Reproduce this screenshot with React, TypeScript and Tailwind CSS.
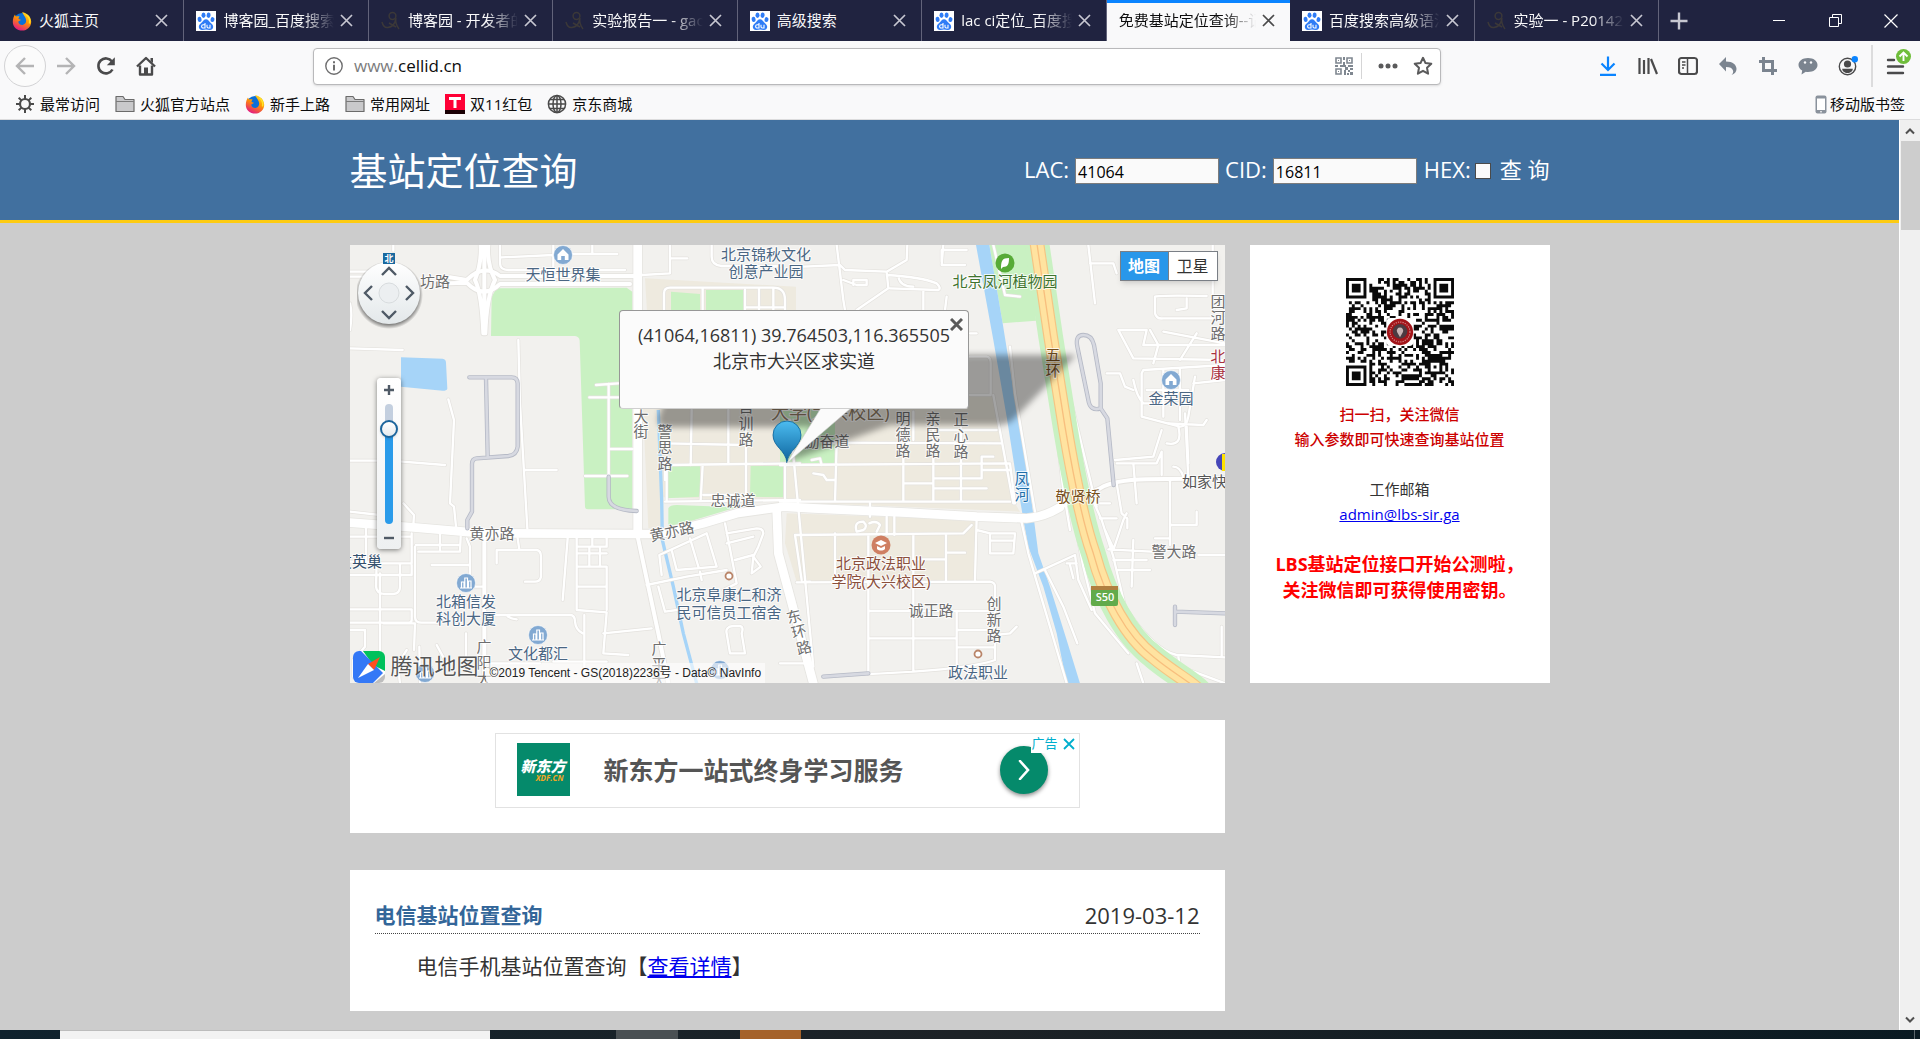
import type { ReactNode } from "react";

const FONT = "font-['Open_Sans','Noto_Sans_CJK_SC',sans-serif]";

/* ---------- small drawings ---------- */

function Svg({ size = 20, box = 20, children, className = "" }: { size?: number; box?: number; children: ReactNode; className?: string }) {
  return (
    <svg width={size} height={size} viewBox={`0 0 ${box} ${box}`} fill="none" className={`shrink-0 ${className}`} aria-hidden="true">
      {children}
    </svg>
  );
}

function FirefoxIcon() {
  return (
    <Svg>
      <defs>
        <linearGradient id="fox" x1="0.8" y1="0" x2="0.3" y2="1">
          <stop offset="0" stopColor="#ffe226" />
          <stop offset="0.45" stopColor="#ff9400" />
          <stop offset="1" stopColor="#e31587" />
        </linearGradient>
      </defs>
      <circle cx="10" cy="10.5" r="8.6" fill="#0a6fd8" />
      <path d="M10 1.2c5 .6 9.200 4.200 9.200 9.600 0 5-4 8.800-9 8.800S.8 16 .8 11c0-3 .9-6 2.200-7.600.2 1 .5 1.600 1 2.200C5 5 6.500 5 7.600 5.500 6.800 6.200 6.400 7 6.600 8l2.200.8c-.4 1-2 1.300-2.600 2 .6 2.600 3 3.600 5 3 2.600-.8 3.600-3.400 2.600-6C13 5.400 11.200 3.400 10 1.200z" fill="url(#fox)" />
      <path d="M14.500 4c2.600 2 3.800 5.300 3 8.500" stroke="#ffe226" strokeWidth="1.500" />
    </Svg>
  );
}

function BaiduIcon() {
  return (
    <Svg>
      <rect width="20" height="20" fill="#fff" />
      <g fill="#2f7cf6">
        <ellipse cx="3.600" cy="8.400" rx="2" ry="2.600" transform="rotate(-12 3.600 8.400)" />
        <ellipse cx="7.500" cy="4.200" rx="2" ry="2.700" />
        <ellipse cx="12.600" cy="4.200" rx="2" ry="2.700" transform="rotate(8 12.600 4.200)" />
        <ellipse cx="16.500" cy="8.600" rx="2" ry="2.500" transform="rotate(12 16.500 8.600)" />
        <path d="M10 8.200c2 0 2.800 1.600 4 3 1.300 1.400 3.400 2.500 3.200 4.900-.2 2.200-1.900 3-3.700 2.800-1.200-.2-2.300-.5-3.500-.5s-2.300.3-3.500.5c-1.800.2-3.500-.6-3.700-2.800-.2-2.400 1.900-3.500 3.200-4.900 1.200-1.400 2-3 4-3z" />
      </g>
      <path d="M9 12v5H7.200a1.600 1.600 0 0 1 0-3.200H9M11 13.800v2c0 .8.500 1.200 1.300 1.200H14v-3.200" stroke="#fff" strokeWidth="1.100" />
    </Svg>
  );
}

function BlogIcon() {
  return (
    <Svg>
      <g stroke="#3b3838" strokeWidth="1.500">
        <circle cx="11.500" cy="5" r="3.400" />
        <path d="M1 11c1 4 3 6 6 5.500 4-.5 7-4 8-9M15 7c-1 4 0 7 3 11M8 12l7 4" />
      </g>
    </Svg>
  );
}

function CloseGlyph({ className = "text-[#c7c7d1]" }: { className?: string }) {
  return (
    <Svg size={13} box={13} className={className}>
      <path d="M1 1l11 11M12 1L1 12" stroke="currentColor" strokeWidth="1.700" />
    </Svg>
  );
}

function FolderIcon() {
  return (
    <Svg>
      <path d="M1 17.500V2.500h7l2 3h9v12z" fill="#c9c9cb" stroke="#6b6b6b" strokeWidth="1.200" strokeLinejoin="round" />
      <path d="M1 7.500h18" stroke="#7b7b7b" />
    </Svg>
  );
}

function GearIcon() {
  return (
    <Svg>
      <circle cx="10" cy="10" r="5" stroke="#4a4a4a" strokeWidth="2.200" />
      <g stroke="#4a4a4a" strokeWidth="2">
        <path d="M10 1v4M10 15v4M1 10h4M15 10h4M3.700 3.700l2.700 2.700M13.600 13.600l2.700 2.700M3.700 16.300l2.700-2.700M13.600 6.400l2.700-2.700" />
      </g>
    </Svg>
  );
}

function ShopIcon() {
  return (
    <Svg>
      <rect width="20" height="20" fill="#ff0036" />
      <rect y="16" width="20" height="4" fill="#1a0005" />
      <path d="M4 4.500h12M10 4.500V14" stroke="#fff" strokeWidth="3" />
    </Svg>
  );
}

function GlobeIcon() {
  return (
    <Svg>
      <g stroke="#4a4a4a" strokeWidth="1.500">
        <circle cx="10" cy="10" r="8.600" />
        <ellipse cx="10" cy="10" rx="4" ry="8.600" />
        <path d="M10 1.400v17.200M1.400 10h17.200M2.800 5.500h14.400M2.800 14.500h14.400" />
      </g>
    </Svg>
  );
}

function PhoneIcon() {
  return (
    <svg width="12" height="19" viewBox="0 0 12 19" aria-hidden="true">
      <rect x="0.500" y="0.500" width="11" height="18" rx="2" fill="#8a929c" />
      <rect x="2" y="3.500" width="8" height="11.500" fill="#fff" />
      <path d="M5 16.800h2" stroke="#fff" />
    </svg>
  );
}

function Chevron({ up = false }: { up?: boolean }) {
  return (
    <Svg size={10} box={10}>
      <path d={up ? "M1 7.500L5 3.500L9 7.500" : "M1 2.500L5 6.500L9 2.500"} stroke="#505050" strokeWidth="2" />
    </Svg>
  );
}

/* ---------- browser chrome ---------- */

type Tab = { title: string; icon?: ReactNode; active?: boolean; fade?: boolean };

const tabs: Tab[] = [
  { title: "火狐主页", icon: <FirefoxIcon /> },
  { title: "博客园_百度搜索", icon: <BaiduIcon />, fade: true },
  { title: "博客园 - 开发者的网上家园", icon: <BlogIcon />, fade: true },
  { title: "实验报告一 - gaoxing", icon: <BlogIcon />, fade: true },
  { title: "高级搜索", icon: <BaiduIcon /> },
  { title: "lac ci定位_百度搜索", icon: <BaiduIcon />, fade: true },
  { title: "免费基站定位查询--记录", active: true, fade: true },
  { title: "百度搜索高级语法", icon: <BaiduIcon />, fade: true },
  { title: "实验一 - P201421", icon: <BlogIcon />, fade: true },
];

function TabStrip() {
  return (
    <div className="flex h-[41px] shrink-0 bg-[#202340] text-[15px] text-[#f9f9fa]">
      <div role="tablist" className="flex w-[1659px] min-w-0">
        {tabs.map((t) => (
          <div
            key={t.title}
            role="tab"
            aria-selected={!!t.active}
            className={
              t.active
                ? "flex min-w-0 flex-1 items-center border-t-3 border-[#0a84ff] bg-[#f9f9fa] pr-[15px] pb-[3px] pl-3 text-[#0c0c0d]"
                : "flex min-w-0 flex-1 items-center border-r border-[#62637a] pr-[15px] pl-3"
            }
          >
            {t.icon && <span className="mr-[7px]">{t.icon}</span>}
            <span
              className={
                t.fade
                  ? "min-w-0 flex-1 overflow-hidden whitespace-nowrap [mask-image:linear-gradient(to_left,transparent,black_32px)]"
                  : "min-w-0 flex-1 overflow-hidden whitespace-nowrap"
              }
            >
              {t.title}
            </span>
            <button type="button" aria-label="关闭标签页" className="ml-1.5">
              <CloseGlyph className={t.active ? "text-[#4a4a4a]" : "text-[#c7c7d1]"} />
            </button>
          </div>
        ))}
      </div>
      <button type="button" aria-label="新建标签页" className="flex w-10 items-center justify-center">
        <Svg size={18} box={18}>
          <path d="M9 0.500v17M0.500 9h17" stroke="#c7c7d1" strokeWidth="2.400" />
        </Svg>
      </button>
      <div className="mr-px ml-auto flex">
        <button type="button" aria-label="最小化" className="flex w-14 items-center justify-center">
          <Svg size={12} box={12}>
            <path d="M0 5.500h12" stroke="#fff" />
          </Svg>
        </button>
        <button type="button" aria-label="还原" className="flex w-14 items-center justify-center">
          <Svg size={13} box={13}>
            <path d="M0.500 3.500h9v9h-9zM3.500 3.500v-3h9v9h-3" stroke="#fff" />
          </Svg>
        </button>
        <button type="button" aria-label="关闭" className="flex w-14 items-center justify-center">
          <Svg size={14} box={14}>
            <path d="M0.500 0.500l13 13M13.500 0.500l-13 13" stroke="#fff" strokeWidth="1.200" />
          </Svg>
        </button>
      </div>
    </div>
  );
}

function ToolButton({ label, children }: { label: string; children: ReactNode }) {
  return (
    <button type="button" aria-label={label} className="flex h-10 w-10 shrink-0 items-center justify-center">
      {children}
    </button>
  );
}

function NavBar() {
  return (
    <div className="flex h-[50px] shrink-0 items-center bg-[#f9f9fa] pr-1 pl-1">
      <button type="button" aria-label="后退" className="flex h-[42px] w-[42px] shrink-0 items-center justify-center rounded-full border border-[#d3d3d5] bg-[#fbfbfb]">
        <Svg>
          <path d="M19 10H2M10 2L2 10l8 8" stroke="#b4b4b5" strokeWidth="2.400" />
        </Svg>
      </button>
      <ToolButton label="前进">
        <Svg>
          <path d="M1 10h17M10 2l8 8-8 8" stroke="#b4b4b5" strokeWidth="2.400" />
        </Svg>
      </ToolButton>
      <ToolButton label="刷新">
        <Svg>
          <path d="M16.500 13.500A7.500 7.500 0 1 1 16 5.500" stroke="#4a4a4b" strokeWidth="2.600" />
          <path d="M18.800 1.200v8h-8z" fill="#4a4a4b" />
        </Svg>
      </ToolButton>
      <ToolButton label="主页">
        <Svg>
          <path d="M1 10.500L10 2l9 8.500" stroke="#4a4a4b" strokeWidth="2.400" strokeLinejoin="round" />
          <path d="M4 9.500V18.500h12V9.500" stroke="#4a4a4b" strokeWidth="2.400" strokeLinejoin="round" />
          <path d="M8 18.500v-7h4v7z" fill="#4a4a4b" />
          <path d="M14.500 2h2.500v5l-2.500-2z" fill="#4a4a4b" />
        </Svg>
      </ToolButton>
      <div className="w-[147px] shrink-0" />
      <div className="flex h-[37px] min-w-0 flex-1 items-center rounded-sm border border-[#b9b9bb] bg-white pr-[7px] pl-[11px] shadow-sm">
        <Svg size={18} box={18}>
          <circle cx="9" cy="9" r="8.200" stroke="#6e6e6f" strokeWidth="1.400" />
          <path d="M9 7.800V13.500M9 4.200v2" stroke="#6e6e6f" strokeWidth="2" />
        </Svg>
        <div className="ml-[11px] flex-1 text-[17px] text-[#0c0c0d]">
          <span className="text-[#7c7c7d]">www.</span>cellid.cn
        </div>
        <Svg size={18} box={18}>
          <g stroke="#7f8790" strokeWidth="1.600">
            <path d="M1 1h5v5H1zM12 1h5v5h-5zM1 12h5v5H1z" />
          </g>
          <path d="M3 3h1v1H3zM14 3h1v1h-1zM3 14h1v1H3zM8 0h2v3H8zM8 5h2v3H8zM0 8h3v2H0zM5 8h6v2H5zM13 8h5v2h-5zM10 10h3v3h-3zM13 13h2v2h-2zM15 11h3v2h-3zM9 13h2v5H9zM12 16h2v2h-2zM15 15h3v3h-3z" fill="#7f8790" />
        </Svg>
        <div className="mx-2 h-[26px] w-px bg-[#d5d5d6]" />
        <button type="button" aria-label="页面操作" className="flex w-9 justify-center">
          <Svg>
            <circle cx="3" cy="10" r="2.500" fill="#5a5a5b" />
            <circle cx="10" cy="10" r="2.500" fill="#5a5a5b" />
            <circle cx="17" cy="10" r="2.500" fill="#5a5a5b" />
          </Svg>
        </button>
        <button type="button" aria-label="收藏" className="ml-[7px]">
          <Svg>
            <path d="M10 1.800l2.500 5.300 5.800.7-4.300 4 1.100 5.900L10 14.800l-5.100 2.900L6 11.800l-4.300-4 5.800-.7z" stroke="#5a5a5b" strokeWidth="2" strokeLinejoin="round" />
          </Svg>
        </button>
      </div>
      <div className="w-[147px] shrink-0" />
      <ToolButton label="下载">
        <Svg>
          <path d="M10 .5v13M3.500 7.500L10 14l6.500-6.500M2 18.800h16" stroke="#0a84ff" strokeWidth="2.200" />
        </Svg>
      </ToolButton>
      <ToolButton label="我的足迹">
        <Svg>
          <path d="M1.500 2v16M6 4v14M10.500 2v16" stroke="#4a4a4b" strokeWidth="2.200" />
          <path d="M13 3l6 15" stroke="#4a4a4b" strokeWidth="2.200" />
        </Svg>
      </ToolButton>
      <ToolButton label="侧栏">
        <Svg>
          <rect x="1" y="2" width="18" height="16" rx="2.500" stroke="#4a4a4b" strokeWidth="2.200" />
          <path d="M9.500 2v16M4 6h3.500M4 9h3.500M4 12h2" stroke="#4a4a4b" strokeWidth="1.500" />
        </Svg>
      </ToolButton>
      <ToolButton label="撤销">
        <Svg>
          <path d="M8 1v4.500c7 0 10.500 3.500 10.500 7.500 0 3-2 5-5 6 1.500-1.500 2-3 1.500-4.500C14.300 12 12 11 8 11v4.500L1 8z" fill="#7b848f" />
        </Svg>
      </ToolButton>
      <ToolButton label="截图">
        <Svg>
          <path d="M5.500 1v13.500H19M1 5.500h13.500V19" stroke="#7b848f" strokeWidth="3" />
        </Svg>
      </ToolButton>
      <ToolButton label="聊天">
        <Svg>
          <path d="M10 2c5.500 0 9.500 2.800 9.500 7s-4 7-9.500 7c-.8 0-1.500 0-2.200-.2L3.500 18.500l.7-4C1.800 13.200.5 11.200.5 9c0-4.200 4-7 9.500-7z" fill="#7b848f" />
          <circle cx="7" cy="6.500" r="1.200" fill="#f9f9fa" />
          <circle cx="13" cy="6.500" r="1.200" fill="#f9f9fa" />
        </Svg>
      </ToolButton>
      <ToolButton label="账户">
        <Svg>
          <circle cx="9.500" cy="10.500" r="8.200" stroke="#4a4a4b" strokeWidth="1.400" />
          <circle cx="9.500" cy="8" r="3.600" fill="#4a4a4b" />
          <path d="M4.200 12.800h10.600c0 2.600-2.300 4.200-5.300 4.200s-5.300-1.600-5.300-4.200z" fill="#4a4a4b" />
          <circle cx="16.800" cy="3.200" r="3.200" fill="#0a84ff" />
        </Svg>
      </ToolButton>
      <div className="mx-[3px] h-[42px] w-[2px] bg-[#dcdcdd]" />
      <ToolButton label="菜单">
        <Svg size={34} box={34}>
          <path d="M9 11h6M9 17.500h15M9 24h15" stroke="#4a4a4b" strokeWidth="2.400" strokeLinecap="round" />
          <circle cx="24.500" cy="7.500" r="7.500" fill="#6fbe3b" />
          <path d="M24.500 12V4M20.500 7.500l4-4 4 4" stroke="#fff" strokeWidth="1.900" />
        </Svg>
      </ToolButton>
    </div>
  );
}

const bookmarks: { label: string; icon: ReactNode }[] = [
  { label: "最常访问", icon: <GearIcon /> },
  { label: "火狐官方站点", icon: <FolderIcon /> },
  { label: "新手上路", icon: <FirefoxIcon /> },
  { label: "常用网址", icon: <FolderIcon /> },
  { label: "双11红包", icon: <ShopIcon /> },
  { label: "京东商城", icon: <GlobeIcon /> },
];

function BookmarkBar() {
  return (
    <div className="flex h-[29px] shrink-0 items-center gap-[15px] border-b border-[#dcdcdd] bg-[#f9f9fa] pr-[15px] pb-0.5 pl-[15px] text-[15px] text-[#0c0c0d]">
      {bookmarks.map((b) => (
        <button type="button" key={b.label} className="flex items-center gap-[5px] whitespace-nowrap">
          {b.icon}
          {b.label}
        </button>
      ))}
      <button type="button" className="ml-auto flex items-center gap-[3px] whitespace-nowrap">
        <PhoneIcon />
        移动版书签
      </button>
    </div>
  );
}

/* ---------- map ---------- */

type Tile = { dx: number; dy: number; d: string };

const NW = { dx: -30, dy: -375 };
const NE = { dx: 1290, dy: -45 };
const SW = { dx: -30, dy: 465 };
const SE = { dx: 1290, dy: 525 };

const beige: Tile[] = [
  { ...NE, d: "M-405 145L48 170V500L640 495L705 820L720 845L0 815L-385 800V480z" },
  { ...SW, d: "M908 0H970V385H925z" },
  { ...SE, d: "M20 280L320 290L585 300V480L50 485L15 370z" },
];

const green: Tile[] = [
  { ...NW, d: "M470 505L860 503L877 515V1168H745Q736 1168 735 1160L719 662Q718 650 705 648H453L455 530z" },
  { ...NW, d: "M993 515L1080 522V600H993zM1098 510H1213V600H1098z" },
  { ...SW, d: "M985 195L1080 197V290L978 295zM1232 198H1330V292L1230 290zM985 325Q990 315 1010 315L1190 322L1030 370L985 378z" },
  { ...NE, d: "M628 45H750L768 272L668 280z" },
  { ...NE, d: "M0 520H165V700H0z" },
];

const major: Tile[] = [
  { ...SW, d: "M893 -480V400" },
  { ...SW, d: "M30 368L220 382L430 400L880 402H960L1090 370L1190 340L1330 320L1420 325L1700 338L1910 350L2060 355Q2110 352 2160 322" },
  { ...SW, d: "M1310 330L1315 460L1350 590L1420 850" },
];

const mid: Tile[] = [
  { ...SW, d: "M893 410L955 700L985 850" },
  { ...SW, d: "M433 410V850" },
  { ...NW, d: "M433 375V640M422 375Q425 430 405 480Q425 520 430 640M445 375Q440 430 465 480Q440 530 436 640" },
  { ...NW, d: "M330 472L380 480Q430 430 480 468H900M330 490L380 488Q430 540 480 492H870" },
  { ...SE, d: "M840 262Q900 230 960 205Q1000 180 1100 178L1335 175" },
];

const minor: Tile[] = [
  { ...NW, d: "M480 375V430Q480 450 505 450H855M485 412L640 405M640 375V440M690 402H832M757 375V400M990 375V460L905 465M990 415H1042M1115 375V410Q1115 435 1145 438H1320M30 685L188 690M160 375V392M30 455H100M30 470H100M30 550Q38 580 30 630" },
  { ...NW, d: "M972 570V520Q972 503 990 503H1300Q1335 503 1335 540V570M1088 505V570M1215 510V570M1257 505V570M1300 505V570M1215 562H1335" },
  { ...NW, d: "M535 660L540 850L562 1225M555 1050H650M325 838L342 900L330 1150L342 1160L348 1220M30 1022H150L315 1035M768 795L835 790M806 792V1070M748 832H835M806 987H878M735 1068H862" },
  { ...SW, d: "M30 335L120 345M190 310L222 345L220 375M30 410H215M78 385V490H215V400M30 485H110L108 560Q110 582 135 582H160Q180 580 180 560V490M120 520V850M30 525H215V495M30 628H215V660Q215 668 205 668H30M130 670H225L222 750M30 690H75V740L40 780V830M228 435H360M225 440V650Q225 668 245 668H300M235 455H360L362 410M275 495H390V440L380 415M390 495V560H430M300 400V450M240 850L238 740M290 735L320 790M378 700V790M180 850Q170 790 200 750" },
  { ...SW, d: "M470 490V450H590Q603 452 603 470V530Q600 545 585 545H555M533 415L538 450M683 415L668 600M710 415V630L800 637L790 760L865 765M712 440H800V415M757 415V440M748 440V500M780 440V500M712 500H800V630M712 460H800M712 560H800M800 415V440M445 645H690Q705 645 705 665Q707 690 728 700M733 645V820M500 645Q505 655 530 658M790 700L935 685M433 790H600M640 785H800" },
  { ...SW, d: "M975 195L1380 190M975 130L1215 135M1055 30L1052 195M1165 30V190M1218 30V290M1088 195L1082 300M975 305L1380 300M1335 195V300M1090 285H1218M980 195V300M975 240V190" },
  { ...SW, d: "M965 525L958 465L1100 400L1130 500L1010 510L995 450M1050 415L1075 500M920 555L1040 530L1160 510M955 560L975 635L1010 630M1155 370L1190 550L1150 570M1160 400L1250 385Q1270 385 1270 400L1255 440L1240 470L1262 500L1235 520M1160 430L1240 410M1235 520L1240 470M1185 480L1240 465M1085 540L1080 515M1160 700Q1155 680 1180 678H1200Q1212 680 1205 700L1215 760H1170z" },
  { ...NE, d: "M170 45L190 210L195 240M70 110L180 105L195 120L320 125L380 90L382 45M320 125L325 175L230 240M190 150L230 165H260V150H220V165M320 135Q420 140 470 160Q485 175 475 180L330 175M430 180V240M355 140Q360 170 400 170M490 45L485 105H555M485 95V60H560M500 200L495 240M570 310H590" },
  { ...NE, d: "M640 45L675 195L720 200M570 380H620Q632 382 632 400V495H570M690 350L705 490L765 845M800 245L825 560L850 780L870 900M870 500L950 830M640 495L700 820M400 545V630M0 705L690 700L705 820M130 638L665 640M370 590V815M460 590V815M543 590V815M370 760H460M460 745H605V680H640M460 775H620M605 720H690M170 640L165 815M270 820V860M0 815H690M480 600H650M95 690L120 685L125 705M100 730L130 735L140 750H165" },
  { ...NE, d: "M925 45L945 220M930 100H1000L1010 130M1125 200Q1140 195 1280 198M1125 200V250Q1130 268 1150 265H1335M1190 240L1220 235V205M1298 45V200M1015 300L1060 385L1335 390M1015 300H1100L1090 345H1335M1110 300L1135 345L1120 400M1150 305L1335 340M1250 310L1200 390M980 430H1020L1035 470L1060 480M1085 430L1090 420L1335 405M1085 430V560L1200 590Q1220 590 1225 560L1245 440M1100 480H1225M1090 520H1220M1150 420V560M1200 420V570M1060 450Q1070 500 1090 520M1240 460L1335 450M1145 600L1120 680L1005 690M1220 590L1225 700M1160 640Q1210 650 1195 590" },
  { ...SE, d: "M45 345L550 340L575 315M45 345L65 480M165 340V480M265 345V760M400 345V755M498 345V480M590 295L585 480M55 487L630 485Q645 487 645 500V720Q560 750 265 762M50 487L90 485M500 398H555M400 418H498M590 330L630 340H705L700 400H630V340M630 362H702M320 290V345M343 290V345M265 573H645M265 655H530M530 575V740M530 630H645M530 682H645M645 645L690 640L710 620M230 335Q220 305 250 305Q265 320 250 330zM268 310Q290 300 300 315L290 335" },
  { ...SE, d: "M720 285L745 400L860 790M870 230L910 440L945 580L1045 700M765 460L885 405L895 480L935 570M795 450L850 560L892 670M860 430H890M870 435L880 475M925 210L965 300L1000 410L1035 560Q1120 690 1190 705L1335 712M1000 390L1030 300L1040 280M960 295H1010M975 330L1000 385M960 250H990M1010 190L1025 280L1042 295V325M1060 130L1070 250M1010 130H1130L1145 95M1145 95V165M1170 180V375M1125 355H1170M1170 315H1250V275M1180 140Q1200 140 1210 170M1215 -20L1225 175M985 388L1115 395M1000 420L1100 420M1015 450H1110M1060 360L1055 500M1255 405H1335M1165 10L1270 15L1280 0M1195 710L1200 740L1335 790M1070 730L1090 790M1325 620V712M0 730H80M30 0L100 740" },
];

const grey: Tile[] = [
  { ...NW, d: "M388 772H515Q532 772 533 790V980Q530 1005 505 1008L410 1015Q395 1016 396 1035V1175L382 1200V1225M438 775L443 1008" },
  { ...SW, d: "M806 230V290Q806 330 890 333" },
  { ...NE, d: "M962 535Q930 545 925 510L892 350Q885 315 910 315Q935 315 942 345L962 460V535L982 565L1001 765" },
  { ...SE, d: "M1185 560V615M1185 575L1335 580M130 770L265 760" },
];

const highway = "M770 -535L812 -250L855 20C880 170 905 300 940 400C975 530 1040 650 1120 710C1180 760 1230 785 1260 815";

function Roads({ items, width, color }: { items: Tile[]; width: number; color: string }) {
  return (
    <g fill="none" stroke={color} strokeWidth={width} strokeLinecap="round" strokeLinejoin="round">
      {items.map((t, i) => (
        <path key={i} d={t.d} transform={`translate(${t.dx} ${t.dy})`} />
      ))}
    </g>
  );
}

function Areas({ items, color }: { items: Tile[]; color: string }) {
  return (
    <g fill={color}>
      {items.map((t, i) => (
        <path key={i} d={t.d} transform={`translate(${t.dx} ${t.dy})`} />
      ))}
    </g>
  );
}

type Label = { x: number; y: number; t: string; c: string; anchor?: "start" | "end"; rot?: number };

const ROAD = "#6e6e6e";
const PLACE = "#4a6683";
const BROWN = "#8a4f3c";

const column = (text: string, x: number, ys: number[], c = ROAD): Label[] => [...text].map((t, i) => ({ x, y: ys[i], t, c }));

const labels: Label[] = [
  { x: 213, y: 30, t: "天恒世界集", c: PLACE },
  { x: 416, y: 10, t: "北京锦秋文化", c: PLACE },
  { x: 416, y: 27, t: "创意产业园", c: PLACE },
  { x: 85, y: 37, t: "坊路", c: ROAD },
  { x: 655, y: 37, t: "北京凤河植物园", c: "#40742f" },
  ...column("五环", 703, [110, 126], "#77501c"),
  ...column("明德路", 553, [174, 190, 206]),
  ...column("亲民路", 583, [174, 190, 206]),
  ...column("正心路", 611, [175, 191, 207]),
  ...column("凤河", 672, [234, 250], "#1e6ea8"),
  { x: 728, y: 252, t: "敬贤桥", c: "#77501c" },
  { x: 821, y: 154, t: "金荣园", c: PLACE },
  { x: 832, y: 237, t: "如家快", c: "#555555", anchor: "start" },
  ...column("团河路", 868, [57, 73, 89]),
  ...column("北康", 868, [112, 128], "#a8323f"),
  { x: 477, y: 197, t: "励奋道", c: ROAD },
  ...column("大街", 291, [172, 187]),
  ...column("警思路", 315, [187, 203, 219]),
  ...column("营训路", 396, [162, 179, 195]),
  { x: 383, y: 256, t: "忠诚道", c: ROAD },
  { x: 142, y: 289, t: "黄亦路", c: ROAD },
  { x: 322, y: 287, t: "黄亦路", c: ROAD, rot: -12 },
  { x: 32, y: 317, t: "友英巢", c: "#334f6d", anchor: "end" },
  { x: 116, y: 357, t: "北箱信发", c: PLACE },
  { x: 116, y: 374, t: "科创大厦", c: PLACE },
  { x: 188, y: 409, t: "文化都汇", c: PLACE },
  { x: 379, y: 350, t: "北京阜康仁和济", c: PLACE },
  { x: 379, y: 368, t: "民可信员工宿舍", c: PLACE },
  ...column("广阳大", 134, [402, 418, 434]),
  ...column("广平大", 309, [404, 420, 436]),
  { x: 444, y: 372, t: "东", c: ROAD, rot: -14 },
  { x: 449, y: 387, t: "环", c: ROAD, rot: -14 },
  { x: 454, y: 403, t: "路", c: ROAD, rot: -14 },
  { x: 531, y: 319, t: "北京政法职业", c: BROWN },
  { x: 531, y: 337, t: "学院(大兴校区)", c: BROWN },
  { x: 581, y: 366, t: "诚正路", c: ROAD },
  ...column("创新路", 644, [359, 375, 391]),
  { x: 628, y: 428, t: "政法职业", c: PLACE },
  { x: 824, y: 307, t: "警大路", c: ROAD },
];

function MapPins() {
  return (
    <g>
      {[
        [213, 10],
        [821, 135],
      ].map(([x, y]) => (
        <g key={x} transform={`translate(${x} ${y})`}>
          <circle r="9.500" fill="#82a9d2" stroke="#fff" strokeOpacity="0.600" />
          <path d="M0-6L5.500-.5V5H1.800V1H-1.800V5H-5.500V-.5z" fill="#fff" />
        </g>
      ))}
      {[
        [116, 338],
        [188, 390],
        [75, 428],
        [370, 425],
      ].map(([x, y]) => (
        <g key={x} transform={`translate(${x} ${y})`}>
          <circle r="9.500" fill="#82a9d2" stroke="#fff" strokeOpacity="0.600" />
          <path d="M-6 5H6M-4.500 5V-1H-2V5M-1.200 5V-5H1.500V5M2.500 5V-2H5V5" stroke="#fff" fill="none" strokeWidth="1.200" />
        </g>
      ))}
      {[
        [379, 331],
        [628, 409],
      ].map(([x, y]) => (
        <circle key={x} cx={x} cy={y} r="3.500" fill="#fff" stroke="#b98468" strokeWidth="1.800" />
      ))}
      <circle cx="655" cy="18" r="9.500" fill="#57ab37" />
      <path d="M651 24c0-8 1-11 8-11 0 6-1 9-6 9" fill="#fff" />
      <circle cx="531" cy="300" r="9.500" fill="#cf7f62" />
      <path d="M531 295l6 3-6 3-6-3zM527 301v3c2 2 6 2 8 0v-3l-4 2z" fill="#fff" />
      <circle cx="875" cy="217" r="9" fill="#4646b8" />
      <rect x="872" y="209" width="6" height="17" fill="#ffe200" />
      <rect x="741" y="341" width="27" height="20" rx="2" fill="#62ab4b" />
      <rect x="741" y="341" width="27" height="4" fill="#b08040" />
      <text x="755" y="356" textAnchor="middle" fontSize="11" fontWeight="600" fill="#fff">
        S50
      </text>
    </g>
  );
}

function MapCanvas() {
  return (
    <>
      <svg viewBox="0 0 2625 1314" preserveAspectRatio="xMidYMid slice" className="absolute inset-0 h-full w-full" aria-hidden="true">
        <rect width="2625" height="1314" fill="#f2f1ee" />
        <Areas items={beige} color="#eeeadf" />
        <Areas items={green} color="#c9f1c2" />
        <path d="M183 712L308 716Q318 717 318 728L322 806Q320 812 308 812L183 800z" transform="translate(-30 -375)" fill="#a6d4f8" />
        <path d="M588 45L640 330L680 560L705 720L733 885L745 950L790 1070L830 1210L860 1360H900L860 1230L810 1070L775 970L762 870L740 700L705 510L668 280L628 45z" transform="translate(1290 -45)" fill="#a6d4f8" />
        <path d="M955 30L965 300L967 420L1000 560L1030 700L1070 850" transform="translate(-30 465)" fill="none" stroke="#a6d4f8" strokeWidth="10" />
        <Roads items={minor} width={11} color="#e4e2de" />
        <Roads items={mid} width={17} color="#e4e2de" />
        <Roads items={major} width={31} color="#e6e5e1" />
        <Roads items={minor} width={7} color="#ffffff" />
        <Roads items={mid} width={12} color="#ffffff" />
        <Roads items={major} width={26} color="#ffffff" />
        <Roads items={grey} width={13} color="#b6bac6" />
        <Roads items={grey} width={8} color="#d7d9e1" />
        <g transform="translate(1290 525)" fill="none">
          <path d={highway} stroke="#c9f1c2" strokeWidth="74" />
          <path d={highway} stroke="#f5c583" strokeWidth="44" />
          <path d={highway} stroke="#ffe3a0" strokeWidth="37" />
          <path d={highway} stroke="#f8bf7e" strokeWidth="4" />
        </g>
      </svg>
      <svg viewBox="0 0 875 438" preserveAspectRatio="xMidYMid slice" className="absolute inset-0 h-full w-full" role="img" aria-label="地图">
        <defs>
          <filter id="soft" x="-10%" y="-20%" width="120%" height="140%">
            <feGaussianBlur stdDeviation="3" />
          </filter>
          <linearGradient id="pin" x1="0" y1="0" x2="0" y2="1">
            <stop offset="0" stopColor="#4cbcf0" />
            <stop offset="1" stopColor="#0d639c" />
          </linearGradient>
        </defs>
        <text x="421" y="174" fontSize="18" fill="#8d7a62" stroke="#fff" strokeWidth="2" paintOrder="stroke">
          大学(大兴校区)
        </text>
        <MapPins />
        <g fontSize="15" paintOrder="stroke" stroke="#ffffff" strokeWidth="2" strokeOpacity="0.800" strokeLinejoin="round">
          {labels.map((l, i) => (
            <text key={i} x={l.x} y={l.y + 5} textAnchor={l.anchor ?? "middle"} fill={l.c} transform={l.rot ? `rotate(${l.rot} ${l.x} ${l.y})` : undefined}>
              {l.t}
            </text>
          ))}
        </g>
        <path d="M620 110L726 110L663 175Q657 180 647 180H540L437 217L463 182H317Q305 182 309 170L330 120z" fill="#000" fillOpacity="0.360" filter="url(#soft)" />
        <path d="M437 218C436 205 423 202 423 190a14 14 0 0 1 28 0C451 202 438 205 437 218z" fill="url(#pin)" stroke="#0d5f95" strokeWidth="0.800" />
        <path d="M471 163L437 218L501 163z" fill="#fbfbfb" stroke="#cfcfcf" strokeWidth="0.600" />
      </svg>
    </>
  );
}

function PanControl() {
  return (
    <div className="absolute top-2 left-[7px]">
      <svg width="66" height="78" viewBox="0 0 66 78" aria-hidden="true">
        <defs>
          <linearGradient id="dial" x1="0" y1="0" x2="0" y2="1">
            <stop offset="0" stopColor="#ffffff" />
            <stop offset="1" stopColor="#e3e8ea" />
          </linearGradient>
          <radialGradient id="dialShade">
            <stop offset="0.850" stopColor="#000" stopOpacity="0.500" />
            <stop offset="1" stopColor="#000" stopOpacity="0" />
          </radialGradient>
        </defs>
        <circle cx="32" cy="42" r="34" fill="url(#dialShade)" />
        <circle cx="32" cy="40" r="31" fill="url(#dial)" />
        <circle cx="32" cy="40" r="10" fill="#eceff1" stroke="#d8dcde" />
        <path d="M25 22L32 15L39 22M25 58L32 65L39 58M15 33L8 40L15 47M49 33L56 40L49 47" fill="none" stroke="#4f5a66" strokeWidth="2.400" />
        <rect x="26" y="0" width="12" height="11" fill="#19699f" />
        <text x="32" y="9" fontSize="9" fontWeight="700" textAnchor="middle" fill="#fff">
          北
        </text>
      </svg>
    </div>
  );
}

function ZoomControl() {
  return (
    <div className="absolute top-[133px] left-[27px] flex w-6 flex-col items-center rounded-sm bg-gradient-to-b from-white to-[#eef0f1] shadow-[0_1px_5px_rgba(0,0,0,0.5)]">
      <button type="button" aria-label="放大" className="flex h-[23px] items-center">
        <Svg size={10} box={10}>
          <path d="M5 0v10M0 5h10" stroke="#4f5a66" strokeWidth="2.400" />
        </Svg>
      </button>
      <div className="relative flex h-[126px] w-full justify-center py-[3px]">
        <div className="h-full w-2 rounded bg-gradient-to-b from-[#c3cfdf] from-20% to-[#2a9bea] to-20%" />
        <div className="absolute top-[19px] h-[18px] w-[18px] rounded-full border-2 border-[#1c659c] bg-gradient-to-b from-white to-[#e6ebee] shadow" />
        <input type="range" aria-label="缩放级别" min={1} max={18} defaultValue={15} className="absolute inset-0 h-full w-full opacity-0 [writing-mode:vertical-lr]" />
      </div>
      <button type="button" aria-label="缩小" className="flex h-[22px] items-center">
        <Svg size={10} box={10}>
          <path d="M0 5h10" stroke="#4f5a66" strokeWidth="2.400" />
        </Svg>
      </button>
    </div>
  );
}

function MapPanel() {
  return (
    <section aria-label="地图" className="relative h-[438px] min-w-0 flex-1 overflow-hidden bg-[#f2f1ee]">
      <MapCanvas />
      <PanControl />
      <ZoomControl />
      <div className="absolute top-1.5 right-[7px] flex h-[30px] border border-[#7a7f86] bg-white text-[16px] leading-7 text-[#333] shadow-md">
        <button type="button" className="w-12 border-r border-[#7a7f86] bg-[#2897ea] font-bold text-white">
          地图
        </button>
        <button type="button" className="w-12">
          卫星
        </button>
      </div>
      <div className="absolute top-[65px] left-[calc(50%-168px)] h-[99px] w-[350px] rounded border border-[#979797] border-b-[#cfcfcf] bg-[#fbfbfb] pt-[11px] text-center text-[18px] leading-[26px] text-[#333]">
        <div className="whitespace-nowrap">(41064,16811) 39.764503,116.365505</div>
        <div>北京市大兴区求实道</div>
        <button type="button" aria-label="关闭" className="absolute top-[7px] right-[5px]">
          <Svg size={13} box={13}>
            <path d="M1 1l11 11M12 1L1 12" stroke="#5a5a5a" strokeWidth="3" />
          </Svg>
        </button>
      </div>
      <div className="absolute bottom-0 left-[3px] flex items-end">
        <Svg size={32} box={32}>
          <rect width="32" height="32" rx="6" fill="#fff" />
          <path d="M10 0H26a6 6 0 0 1 6 6V20L20 14z" fill="#00c15c" />
          <path d="M6 0H8L30 22 20 32H6a6 6 0 0 1-6-6V6a6 6 0 0 1 6-6z" fill="#3478f6" />
          <path d="M32 23V26a6 6 0 0 1-6 6H21z" fill="#bdbdbd" />
          <path d="M15 13L27 6L21 19z" fill="#ff4e1f" />
          <path d="M15 13L5 27L21 19z" fill="#fff" />
        </Svg>
        <span className="ml-1.5 pb-0.5 text-[22px] leading-8 text-[#555] [text-shadow:0_0_2px_#fff,0_0_2px_#fff]">腾讯地图</span>
        <span className="ml-[7px] bg-white/60 px-1 font-['Liberation_Sans','Noto_Sans_CJK_SC',sans-serif] text-[12px] leading-5 whitespace-nowrap text-[#222]">
          ©2019 Tencent - GS(2018)2236号 - Data© NavInfo
        </span>
      </div>
    </section>
  );
}

/* ---------- QR code ---------- */

const N = 37;

function isFinder(x: number, y: number, ox: number, oy: number) {
  const r = Math.max(Math.abs(x - ox - 3), Math.abs(y - oy - 3));
  return r === 3 || r <= 1;
}

function moduleOn(x: number, y: number) {
  const corners = [
    [0, 0],
    [N - 7, 0],
    [0, N - 7],
  ];
  for (const [ox, oy] of corners) {
    if (x >= ox && x < ox + 7 && y >= oy && y < oy + 7) return isFinder(x, y, ox, oy);
    if (x >= ox - 1 && x < ox + 8 && y >= oy - 1 && y < oy + 8) return false;
  }
  const a = Math.max(Math.abs(x - 30), Math.abs(y - 30));
  if (a <= 2) return a !== 1;
  let h = (x * 374761393 + y * 668265263) | 0;
  h = Math.imul(h ^ (h >>> 13), 1274126177);
  return ((h ^ (h >>> 16)) & 1) === 1;
}

const qrPath = Array.from({ length: N * N }, (_, i) => [i % N, Math.floor(i / N)])
  .filter(([x, y]) => moduleOn(x, y))
  .map(([x, y]) => `M${x} ${y}h1v1h-1z`)
  .join("");

function QrCode() {
  return (
    <svg width="108" height="108" viewBox="0 0 37 37" role="img" aria-label="微信二维码">
      <path d={qrPath} fill="#0a0a0a" />
      <rect x="13.800" y="13.700" width="9.400" height="9.600" rx="1.500" fill="#fff" />
      <circle cx="18.500" cy="18.500" r="4.500" fill="#a3151a" />
      <circle cx="18.500" cy="18.500" r="3.400" fill="none" stroke="#d58a8c" strokeWidth="0.400" strokeDasharray="0.400 0.400" />
      <circle cx="18.500" cy="18.300" r="2.500" fill="#4c3b41" />
      <path d="M18.500 20.300L17.500 18.500a1.100 1.100 0 1 1 2 0z" fill="#c9b4b4" />
    </svg>
  );
}

/* ---------- page ---------- */

function Header() {
  return (
    <header className="border-b-3 border-[#fdcb12] bg-[#41709f]">
      <div className="mx-auto flex h-[100px] max-w-[1200px] items-center justify-between text-white">
        <h1 className="text-[38px] leading-[50px]">基站定位查询</h1>
        <form className="flex items-center pt-0.5 text-[22px] leading-8" onSubmit={(e) => e.preventDefault()}>
          <label htmlFor="lac" className="pb-1">
            LAC:
          </label>
          <input id="lac" defaultValue="41064" className="mr-1.5 ml-1.5 h-[26px] w-36 border border-[#7c7c7c] bg-[#fafafa] px-0.5 pt-0.5 text-[16px] text-black" />
          <label htmlFor="cid" className="pb-1">
            CID:
          </label>
          <input id="cid" defaultValue="16811" className="mr-[7px] ml-1.5 h-[26px] w-36 border border-[#7c7c7c] bg-[#fafafa] px-0.5 pt-0.5 text-[16px] text-black" />
          <label htmlFor="hex" className="pb-1">
            HEX:
          </label>
          <input id="hex" type="checkbox" className="ml-1 h-4 w-4 appearance-none border border-[#4a4a4a] bg-[#fafafa]" />
          <button type="submit" className="ml-[9px] pb-1">
            查 询
          </button>
        </form>
      </div>
    </header>
  );
}

function Sidebar() {
  return (
    <aside className="flex w-[300px] shrink-0 flex-col items-center bg-white pt-[33px] text-center text-[15px] leading-[25px]">
      <QrCode />
      <p className="mt-4 font-medium text-[#c00]">
        扫一扫，关注微信
        <br />
        输入参数即可快速查询基站位置
      </p>
      <p className="mt-[25px] text-[#333]">
        工作邮箱
        <br />
        <a href="mailto:admin@lbs-sir.ga" className="text-[#00e] underline">
          admin@lbs-sir.ga
        </a>
      </p>
      <p className="mt-6 text-[18px] leading-[26px] font-bold whitespace-nowrap text-[#f00]">
        LBS基站定位接口开始公测啦，
        <br />
        关注微信即可获得使用密钥。
      </p>
    </aside>
  );
}

function AdCard() {
  return (
    <section aria-label="广告" className="mt-[37px] bg-white px-4 pt-[13px] pb-[25px]">
      <div className="relative mx-auto flex h-[75px] max-w-[585px] items-center border border-[#e2e2e2] pb-0.5 pl-[21px]">
        <div className="flex h-[53px] w-[53px] flex-col items-center justify-center bg-[#058a6b]">
          <span className="text-[15px] leading-4 font-black text-white italic">新东方</span>
          <span className="self-end pr-1.5 text-[8px] leading-2 font-bold text-[#f5a623] italic">XDF.CN</span>
        </div>
        <a href="#xdf" className="ml-[34px] text-[25px] leading-8 font-bold whitespace-nowrap text-[#555]">
          新东方一站式终身学习服务
        </a>
        <button type="button" aria-label="打开" className="mr-[31px] ml-auto flex h-12 w-12 items-center justify-center rounded-full bg-[#058a6b] shadow-[0_2px_4px_rgba(0,0,0,0.45)]">
          <Svg>
            <path d="M6 1l8 9-8 9" stroke="#fff" strokeWidth="2.600" strokeLinecap="round" />
          </Svg>
        </button>
        <div className="absolute top-0 right-0 flex items-center gap-[5px] bg-white pr-1 text-[13px] leading-[19px] text-[#00aecd]">
          广告
          <Svg size={12} box={12}>
            <path d="M1 1l10 10M11 1L1 11" stroke="#00aecd" strokeWidth="1.800" />
          </Svg>
        </div>
      </div>
    </section>
  );
}

function ArticleCard() {
  return (
    <article className="mt-[37px] bg-white px-[25px] pt-[29px] pb-[29px] text-[#333]">
      <div className="flex items-center justify-between border-b border-dotted border-[#444] pb-0.5">
        <h2 className="text-[21px] leading-8 font-bold text-[#369]">电信基站位置查询</h2>
        <time dateTime="2019-03-12" className="text-[22px] leading-8">
          2019-03-12
        </time>
      </div>
      <p className="mt-4 pl-[42px] text-[21px] leading-8">
        电信手机基站位置查询【
        <a href="#detail" className="text-[#00e] underline">
          查看详情
        </a>
        】
      </p>
    </article>
  );
}

function Scrollbar() {
  return (
    <div className="flex w-[21px] shrink-0 flex-col items-center border-l border-white bg-[#f0f0f0]">
      <div className="flex h-[21px] items-center">
        <Chevron up />
      </div>
      <div className="h-[89px] w-[19px] bg-[#cdcdcd]" />
      <div className="mt-auto flex h-[21px] items-center">
        <Chevron />
      </div>
    </div>
  );
}

function Taskbar() {
  return (
    <div className="flex h-[9px] shrink-0 bg-gradient-to-r from-[#0f222d] via-[#1d2226] to-[#0a1a22]">
      <div className="ml-[60px] w-[430px] border-t border-[#bcbcbc] bg-[#f2f2f2]" />
      <div className="ml-[126px] w-[62px] bg-[#4a5053]" />
      <div className="ml-[62px] w-[61px] bg-[#a5622a]" />
      <div className="mr-[5px] ml-auto w-px bg-[#5c666c]" />
    </div>
  );
}

export default function App() {
  return (
    <div className={`flex h-screen flex-col overflow-hidden ${FONT}`}>
      <TabStrip />
      <NavBar />
      <BookmarkBar />
      <div className="flex min-h-0 flex-1">
        <div className="min-w-0 flex-1 overflow-hidden bg-[#ccc]">
          <Header />
          <main className="mx-auto max-w-[1200px] pt-[22px]">
            <div className="flex gap-[25px]">
              <MapPanel />
              <Sidebar />
            </div>
            <div className="mr-[325px]">
              <AdCard />
              <ArticleCard />
            </div>
          </main>
        </div>
        <Scrollbar />
      </div>
      <Taskbar />
    </div>
  );
}
